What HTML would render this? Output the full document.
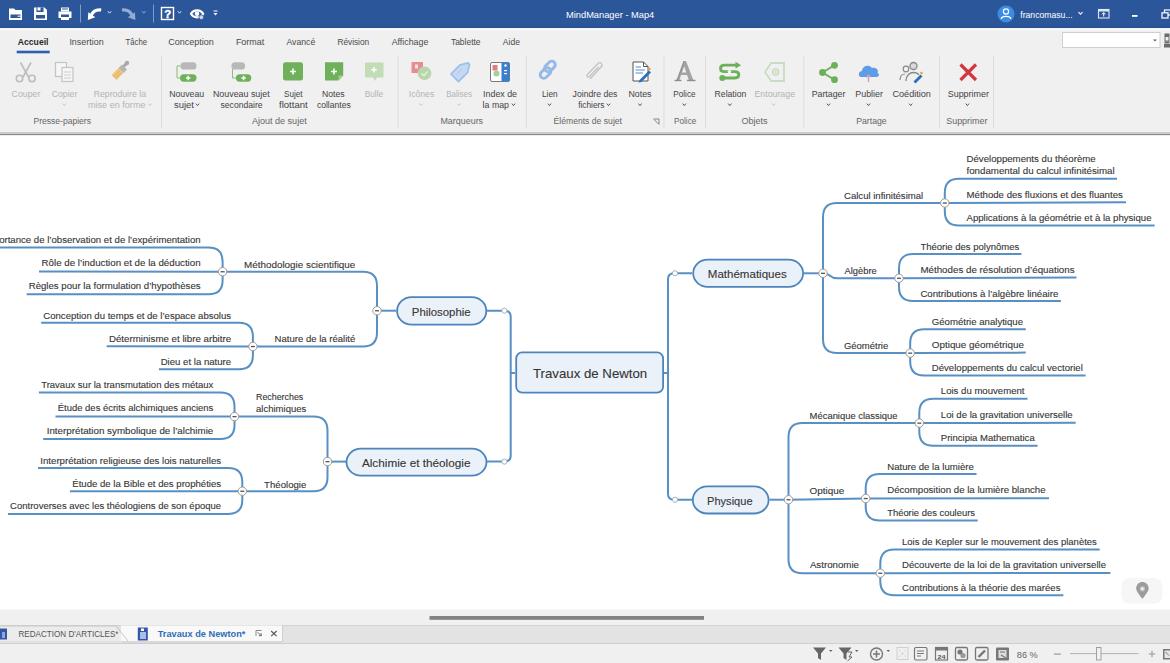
<!DOCTYPE html>
<html><head><meta charset="utf-8"><style>
html,body{margin:0;padding:0;background:#fff;overflow:hidden;}
svg{display:block;font-family:"Liberation Sans",sans-serif;}
.m text{stroke:#444;stroke-width:0.12px;}
</style></head><body>
<svg width="1170" height="663" viewBox="0 0 1170 663">
<rect x="0" y="0" width="1170" height="663" fill="#ffffff"/>
<rect x="0" y="0" width="1170" height="28" fill="#2b579a"/>
<rect x="0" y="28" width="1170" height="107" fill="#f0f0f0"/>
<rect x="0" y="28" width="1170" height="3" fill="#f4f5f4"/>
<rect x="0" y="131" width="1170" height="1" fill="#f3f3f3"/>
<rect x="0" y="132" width="1170" height="1" fill="#c6c6c6"/>
<rect x="0" y="133" width="1170" height="1" fill="#cfcfcf"/>
<rect x="0" y="134" width="1170" height="1" fill="#888888"/>
<rect x="0" y="135" width="1170" height="1" fill="#ededed"/>
<rect x="0" y="609" width="1170" height="1" fill="#f7f7f7"/>
<rect x="0" y="610" width="1170" height="15" fill="#f0f0f0"/>
<rect x="0" y="625" width="1170" height="1" fill="#d2d2d2"/>
<rect x="0" y="626" width="1170" height="17" fill="#e3e3e3"/>
<rect x="0" y="643" width="1170" height="1" fill="#cfcfcf"/>
<rect x="0" y="644" width="1170" height="19" fill="#f0f0f0"/>
<g class="m">
<path d="M515,373 L510.7,373" stroke="#5890c4" stroke-width="2.0" fill="none"/>
<path d="M510.7,373 L510.7,316.7 Q510.7,310.7 504.7,310.7 L487,310.7" stroke="#5890c4" stroke-width="2.0" fill="none"/>
<path d="M510.7,373 L510.7,455.6 Q510.7,461.6 504.7,461.6 L487,461.6" stroke="#5890c4" stroke-width="2.0" fill="none"/>
<path d="M664,373 L668,373" stroke="#5890c4" stroke-width="2.0" fill="none"/>
<path d="M668,373 L668,279.3 Q668,273.3 674,273.3 L692,273.3" stroke="#5890c4" stroke-width="2.0" fill="none"/>
<path d="M668,373 L668,493.7 Q668,499.7 674,499.7 L692,499.7" stroke="#5890c4" stroke-width="2.0" fill="none"/>
<path d="M804,273.3 L823,273.3" stroke="#5890c4" stroke-width="2.0" fill="none"/>
<path d="M769.6,499.7 L788.5,499.7" stroke="#5890c4" stroke-width="2.0" fill="none"/>
<path d="M396,310.7 L377,310.7" stroke="#5890c4" stroke-width="2.0" fill="none"/>
<path d="M346,461.6 L327.5,461.6" stroke="#5890c4" stroke-width="2.0" fill="none"/>
<path d="M823,273.3 L823,217.0 Q823,203.0 837,203.0 L944.8,203.0" stroke="#5890c4" stroke-width="2.0" fill="none" stroke-linecap="butt"/>
<text x="844.0" y="198.7" font-size="9.6" fill="#333" textLength="79.2" lengthAdjust="spacingAndGlyphs">Calcul infinitésimal</text>
<path d="M944.8,203.0 L944.8,192.8 Q944.8,178.8 958.8,178.8 L1117,178.8" stroke="#5890c4" stroke-width="2.0" fill="none" stroke-linecap="butt"/>
<text x="966.5" y="162.1" font-size="9.6" fill="#333" textLength="129.2" lengthAdjust="spacingAndGlyphs">Développements du théorème</text>
<text x="966.5" y="174.4" font-size="9.6" fill="#333" textLength="148.1" lengthAdjust="spacingAndGlyphs">fondamental du calcul infinitésimal</text>
<path d="M944.8,203.0 L1126,202.2" stroke="#5890c4" stroke-width="2.0" fill="none" stroke-linecap="butt"/>
<text x="966.5" y="198.0" font-size="9.6" fill="#333" textLength="156.3" lengthAdjust="spacingAndGlyphs">Méthode des fluxions et des fluantes</text>
<path d="M944.8,203.0 L944.8,211.4 Q944.8,225.4 958.8,225.4 L1154.6,225.4" stroke="#5890c4" stroke-width="2.0" fill="none" stroke-linecap="butt"/>
<text x="966.5" y="221.2" font-size="9.6" fill="#333" textLength="185.0" lengthAdjust="spacingAndGlyphs">Applications à la géométrie et à la physique</text>
<path d="M823,273.3 C831.4,273.3 828.6,278.2 837,278.2 L899,278.2" stroke="#5890c4" stroke-width="2.0" fill="none" stroke-linecap="butt"/>
<text x="844.5" y="273.7" font-size="9.6" fill="#333" textLength="32.3" lengthAdjust="spacingAndGlyphs">Algèbre</text>
<path d="M899,278.2 L899,268.1 Q899,254.1 913,254.1 L1021.4,254.1" stroke="#5890c4" stroke-width="2.0" fill="none" stroke-linecap="butt"/>
<text x="920.4" y="250.1" font-size="9.6" fill="#333" textLength="98.8" lengthAdjust="spacingAndGlyphs">Théorie des polynômes</text>
<path d="M899,278.2 L1076.5,277.6" stroke="#5890c4" stroke-width="2.0" fill="none" stroke-linecap="butt"/>
<text x="920.4" y="273.0" font-size="9.6" fill="#333" textLength="154.2" lengthAdjust="spacingAndGlyphs">Méthodes de résolution d’équations</text>
<path d="M899,278.2 L899,286.9 Q899,300.9 913,300.9 L1060.9,300.9" stroke="#5890c4" stroke-width="2.0" fill="none" stroke-linecap="butt"/>
<text x="920.4" y="296.5" font-size="9.6" fill="#333" textLength="137.9" lengthAdjust="spacingAndGlyphs">Contributions à l’algèbre linéaire</text>
<path d="M823,273.3 L823,339.1 Q823,353.1 837,353.1 L910.2,353.1" stroke="#5890c4" stroke-width="2.0" fill="none" stroke-linecap="butt"/>
<text x="843.9" y="348.6" font-size="9.6" fill="#333" textLength="44.3" lengthAdjust="spacingAndGlyphs">Géométrie</text>
<path d="M910.2,353.1 L910.2,343.2 Q910.2,329.2 924.2,329.2 L1025.8,329.2" stroke="#5890c4" stroke-width="2.0" fill="none" stroke-linecap="butt"/>
<text x="931.8" y="325.1" font-size="9.6" fill="#333" textLength="91.2" lengthAdjust="spacingAndGlyphs">Géométrie analytique</text>
<path d="M910.2,353.1 L1025.8,352.6" stroke="#5890c4" stroke-width="2.0" fill="none" stroke-linecap="butt"/>
<text x="931.8" y="348.1" font-size="9.6" fill="#333" textLength="92.1" lengthAdjust="spacingAndGlyphs">Optique géométrique</text>
<path d="M910.2,353.1 L910.2,361.4 Q910.2,375.4 924.2,375.4 L1085.6,375.4" stroke="#5890c4" stroke-width="2.0" fill="none" stroke-linecap="butt"/>
<text x="931.8" y="371.3" font-size="9.6" fill="#333" textLength="151.0" lengthAdjust="spacingAndGlyphs">Développements du calcul vectoriel</text>
<path d="M788.5,499.7 L788.5,437.1 Q788.5,423.1 802.5,423.1 L919.3,423.1" stroke="#5890c4" stroke-width="2.0" fill="none" stroke-linecap="butt"/>
<text x="809.6" y="419.0" font-size="9.6" fill="#333" textLength="88.0" lengthAdjust="spacingAndGlyphs">Mécanique classique</text>
<path d="M919.3,423.1 L919.3,412.8 Q919.3,398.8 933.3,398.8 L1027.5,398.8" stroke="#5890c4" stroke-width="2.0" fill="none" stroke-linecap="butt"/>
<text x="940.8" y="394.3" font-size="9.6" fill="#333" textLength="83.7" lengthAdjust="spacingAndGlyphs">Lois du mouvement</text>
<path d="M919.3,423.1 L1075.7,422.8" stroke="#5890c4" stroke-width="2.0" fill="none" stroke-linecap="butt"/>
<text x="940.8" y="418.0" font-size="9.6" fill="#333" textLength="131.9" lengthAdjust="spacingAndGlyphs">Loi de la gravitation universelle</text>
<path d="M919.3,423.1 L919.3,431.8 Q919.3,445.8 933.3,445.8 L1037.6,445.8" stroke="#5890c4" stroke-width="2.0" fill="none" stroke-linecap="butt"/>
<text x="940.8" y="441.3" font-size="9.6" fill="#333" textLength="93.9" lengthAdjust="spacingAndGlyphs">Principia Mathematica</text>
<path d="M788.5,499.7 L865.7,498.5" stroke="#5890c4" stroke-width="2.0" fill="none" stroke-linecap="butt"/>
<text x="809.6" y="494.4" font-size="9.6" fill="#333" textLength="34.7" lengthAdjust="spacingAndGlyphs">Optique</text>
<path d="M865.7,498.5 L865.7,488.1 Q865.7,474.1 879.7,474.1 L976.5,474.1" stroke="#5890c4" stroke-width="2.0" fill="none" stroke-linecap="butt"/>
<text x="887.2" y="469.6" font-size="9.6" fill="#333" textLength="86.6" lengthAdjust="spacingAndGlyphs">Nature de la lumière</text>
<path d="M865.7,498.5 L1049,498.2" stroke="#5890c4" stroke-width="2.0" fill="none" stroke-linecap="butt"/>
<text x="887.2" y="492.9" font-size="9.6" fill="#333" textLength="158.4" lengthAdjust="spacingAndGlyphs">Décomposition de la lumière blanche</text>
<path d="M865.7,498.5 L865.7,506.5 Q865.7,520.5 879.7,520.5 L977.7,520.5" stroke="#5890c4" stroke-width="2.0" fill="none" stroke-linecap="butt"/>
<text x="887.2" y="516.0" font-size="9.6" fill="#333" textLength="87.8" lengthAdjust="spacingAndGlyphs">Théorie des couleurs</text>
<path d="M788.5,499.7 L788.5,559.2 Q788.5,573.2 802.5,573.2 L880.3,573.2" stroke="#5890c4" stroke-width="2.0" fill="none" stroke-linecap="butt"/>
<text x="809.9" y="568.4" font-size="9.6" fill="#333" textLength="49.1" lengthAdjust="spacingAndGlyphs">Astronomie</text>
<path d="M880.3,573.2 L880.3,563.4 Q880.3,549.4 894.3,549.4 L1099.7,549.4" stroke="#5890c4" stroke-width="2.0" fill="none" stroke-linecap="butt"/>
<text x="902.0" y="544.9" font-size="9.6" fill="#333" textLength="194.8" lengthAdjust="spacingAndGlyphs">Lois de Kepler sur le mouvement des planètes</text>
<path d="M880.3,573.2 L1110.4,572.9" stroke="#5890c4" stroke-width="2.0" fill="none" stroke-linecap="butt"/>
<text x="902.0" y="568.1" font-size="9.6" fill="#333" textLength="204.0" lengthAdjust="spacingAndGlyphs">Découverte de la loi de la gravitation universelle</text>
<path d="M880.3,573.2 L880.3,581.3 Q880.3,595.3 894.3,595.3 L1063.4,595.3" stroke="#5890c4" stroke-width="2.0" fill="none" stroke-linecap="butt"/>
<text x="902.0" y="590.8" font-size="9.6" fill="#333" textLength="158.4" lengthAdjust="spacingAndGlyphs">Contributions à la théorie des marées</text>
<path d="M377,310.7 L377,285.7 Q377,271.7 363,271.7 L222.6,271.7" stroke="#5890c4" stroke-width="2.0" fill="none" stroke-linecap="butt"/>
<text x="244.0" y="267.5" font-size="9.6" fill="#333" textLength="111.3" lengthAdjust="spacingAndGlyphs">Méthodologie scientifique</text>
<path d="M222.6,271.7 L222.6,261.6 Q222.6,247.6 208.6,247.6 L-20,247.6" stroke="#5890c4" stroke-width="2.0" fill="none" stroke-linecap="butt"/>
<text x="-16.9" y="243.1" font-size="9.6" fill="#333" textLength="217.5" lengthAdjust="spacingAndGlyphs">Importance de l’observation et de l’expérimentation</text>
<path d="M222.6,271.7 L39,271.4" stroke="#5890c4" stroke-width="2.0" fill="none" stroke-linecap="butt"/>
<text x="41.6" y="266.3" font-size="9.6" fill="#333" textLength="159.0" lengthAdjust="spacingAndGlyphs">Rôle de l’induction et de la déduction</text>
<path d="M222.6,271.7 L222.6,280.3 Q222.6,294.3 208.6,294.3 L26.7,294.3" stroke="#5890c4" stroke-width="2.0" fill="none" stroke-linecap="butt"/>
<text x="28.7" y="289.3" font-size="9.6" fill="#333" textLength="171.9" lengthAdjust="spacingAndGlyphs">Règles pour la formulation d’hypothèses</text>
<path d="M377,310.7 L377,332.5 Q377,346.5 363,346.5 L252.9,346.5" stroke="#5890c4" stroke-width="2.0" fill="none" stroke-linecap="butt"/>
<text x="274.6" y="342.4" font-size="9.6" fill="#333" textLength="80.7" lengthAdjust="spacingAndGlyphs">Nature de la réalité</text>
<path d="M252.9,346.5 L252.9,336.7 Q252.9,322.7 238.9,322.7 L41.1,322.7" stroke="#5890c4" stroke-width="2.0" fill="none" stroke-linecap="butt"/>
<text x="43.3" y="318.5" font-size="9.6" fill="#333" textLength="187.8" lengthAdjust="spacingAndGlyphs">Conception du temps et de l’espace absolus</text>
<path d="M252.9,346.5 L106.7,346.3" stroke="#5890c4" stroke-width="2.0" fill="none" stroke-linecap="butt"/>
<text x="108.9" y="341.8" font-size="9.6" fill="#333" textLength="122.2" lengthAdjust="spacingAndGlyphs">Déterminisme et libre arbitre</text>
<path d="M252.9,346.5 L252.9,355.3 Q252.9,369.3 238.9,369.3 L158.9,369.3" stroke="#5890c4" stroke-width="2.0" fill="none" stroke-linecap="butt"/>
<text x="160.7" y="364.7" font-size="9.6" fill="#333" textLength="70.4" lengthAdjust="spacingAndGlyphs">Dieu et la nature</text>
<path d="M327.5,461.6 L327.5,430.6 Q327.5,416.6 313.5,416.6 L234.5,416.6" stroke="#5890c4" stroke-width="2.0" fill="none" stroke-linecap="butt"/>
<text x="256.0" y="399.5" font-size="9.6" fill="#333" textLength="47.3" lengthAdjust="spacingAndGlyphs">Recherches</text>
<text x="256.0" y="412.0" font-size="9.6" fill="#333" textLength="50.3" lengthAdjust="spacingAndGlyphs">alchimiques</text>
<path d="M234.5,416.6 L234.5,406.4 Q234.5,392.4 220.5,392.4 L38.9,392.4" stroke="#5890c4" stroke-width="2.0" fill="none" stroke-linecap="butt"/>
<text x="41.2" y="387.9" font-size="9.6" fill="#333" textLength="172.1" lengthAdjust="spacingAndGlyphs">Travaux sur la transmutation des métaux</text>
<path d="M234.5,416.6 L55.5,416.4" stroke="#5890c4" stroke-width="2.0" fill="none" stroke-linecap="butt"/>
<text x="57.8" y="411.2" font-size="9.6" fill="#333" textLength="155.5" lengthAdjust="spacingAndGlyphs">Étude des écrits alchimiques anciens</text>
<path d="M234.5,416.6 L234.5,424.9 Q234.5,438.9 220.5,438.9 L43.2,438.9" stroke="#5890c4" stroke-width="2.0" fill="none" stroke-linecap="butt"/>
<text x="46.7" y="433.8" font-size="9.6" fill="#333" textLength="166.6" lengthAdjust="spacingAndGlyphs">Interprétation symbolique de l’alchimie</text>
<path d="M327.5,461.6 L327.5,477.2 Q327.5,491.2 313.5,491.2 L242.3,491.2" stroke="#5890c4" stroke-width="2.0" fill="none" stroke-linecap="butt"/>
<text x="264.1" y="487.6" font-size="9.6" fill="#333" textLength="42.2" lengthAdjust="spacingAndGlyphs">Théologie</text>
<path d="M242.3,491.2 L242.3,482.0 Q242.3,468.0 228.3,468.0 L38,468.0" stroke="#5890c4" stroke-width="2.0" fill="none" stroke-linecap="butt"/>
<text x="40.3" y="463.5" font-size="9.6" fill="#333" textLength="180.8" lengthAdjust="spacingAndGlyphs">Interprétation religieuse des lois naturelles</text>
<path d="M242.3,491.2 L70,491.2" stroke="#5890c4" stroke-width="2.0" fill="none" stroke-linecap="butt"/>
<text x="72.3" y="486.7" font-size="9.6" fill="#333" textLength="148.8" lengthAdjust="spacingAndGlyphs">Étude de la Bible et des prophéties</text>
<path d="M242.3,491.2 L242.3,499.9 Q242.3,513.9 228.3,513.9 L8,513.9" stroke="#5890c4" stroke-width="2.0" fill="none" stroke-linecap="butt"/>
<text x="10.1" y="509.4" font-size="9.6" fill="#333" textLength="211.0" lengthAdjust="spacingAndGlyphs">Controverses avec les théologiens de son époque</text>
<rect x="516.2" y="352.4" width="146.89999999999998" height="40.30000000000001" rx="6" fill="#ebf1f9" stroke="#4c84bd" stroke-width="1.8"/>
<text x="533.0" y="378.3" font-size="13.2" fill="#333" textLength="114.2" lengthAdjust="spacingAndGlyphs">Travaux de Newton</text>
<rect x="693.2" y="259.7" width="109.89999999999998" height="27.100000000000023" rx="14.5" fill="#ebf1f9" stroke="#4c84bd" stroke-width="1.8"/>
<text x="707.8" y="278.3" font-size="11" fill="#333" textLength="78.9" lengthAdjust="spacingAndGlyphs">Mathématiques</text>
<rect x="692.8" y="486.3" width="75.80000000000007" height="27.19999999999999" rx="14.5" fill="#ebf1f9" stroke="#4c84bd" stroke-width="1.8"/>
<text x="707.0" y="504.7" font-size="11" fill="#333" textLength="45.6" lengthAdjust="spacingAndGlyphs">Physique</text>
<rect x="397.1" y="297.1" width="89.19999999999999" height="27.599999999999966" rx="14.5" fill="#ebf1f9" stroke="#4c84bd" stroke-width="1.8"/>
<text x="411.8" y="316.1" font-size="11" fill="#333" textLength="58.8" lengthAdjust="spacingAndGlyphs">Philosophie</text>
<rect x="346.5" y="448.6" width="140.0" height="27.0" rx="14.5" fill="#ebf1f9" stroke="#4c84bd" stroke-width="1.8"/>
<text x="361.9" y="467.1" font-size="11" fill="#333" textLength="108.6" lengthAdjust="spacingAndGlyphs">Alchimie et théologie</text>
<circle cx="944.8" cy="203.0" r="4.2" fill="#fff" stroke="#9a9a9a" stroke-width="1"/>
<rect x="942.8" y="202.4" width="4" height="1.3" fill="#555"/>
<circle cx="899" cy="278.2" r="4.2" fill="#fff" stroke="#9a9a9a" stroke-width="1"/>
<rect x="897" y="277.59999999999997" width="4" height="1.3" fill="#555"/>
<circle cx="910.2" cy="353.1" r="4.2" fill="#fff" stroke="#9a9a9a" stroke-width="1"/>
<rect x="908.2" y="352.5" width="4" height="1.3" fill="#555"/>
<circle cx="823" cy="273.3" r="4.2" fill="#fff" stroke="#9a9a9a" stroke-width="1"/>
<rect x="821" y="272.7" width="4" height="1.3" fill="#555"/>
<circle cx="919.3" cy="423.1" r="4.2" fill="#fff" stroke="#9a9a9a" stroke-width="1"/>
<rect x="917.3" y="422.5" width="4" height="1.3" fill="#555"/>
<circle cx="865.7" cy="498.5" r="4.2" fill="#fff" stroke="#9a9a9a" stroke-width="1"/>
<rect x="863.7" y="497.9" width="4" height="1.3" fill="#555"/>
<circle cx="880.3" cy="573.2" r="4.2" fill="#fff" stroke="#9a9a9a" stroke-width="1"/>
<rect x="878.3" y="572.6" width="4" height="1.3" fill="#555"/>
<circle cx="788.5" cy="499.7" r="4.2" fill="#fff" stroke="#9a9a9a" stroke-width="1"/>
<rect x="786.5" y="499.09999999999997" width="4" height="1.3" fill="#555"/>
<circle cx="222.6" cy="271.7" r="4.2" fill="#fff" stroke="#9a9a9a" stroke-width="1"/>
<rect x="220.6" y="271.09999999999997" width="4" height="1.3" fill="#555"/>
<circle cx="252.9" cy="346.5" r="4.2" fill="#fff" stroke="#9a9a9a" stroke-width="1"/>
<rect x="250.9" y="345.9" width="4" height="1.3" fill="#555"/>
<circle cx="377" cy="310.7" r="4.2" fill="#fff" stroke="#9a9a9a" stroke-width="1"/>
<rect x="375" y="310.09999999999997" width="4" height="1.3" fill="#555"/>
<circle cx="234.5" cy="416.6" r="4.2" fill="#fff" stroke="#9a9a9a" stroke-width="1"/>
<rect x="232.5" y="416.0" width="4" height="1.3" fill="#555"/>
<circle cx="242.3" cy="491.2" r="4.2" fill="#fff" stroke="#9a9a9a" stroke-width="1"/>
<rect x="240.3" y="490.59999999999997" width="4" height="1.3" fill="#555"/>
<circle cx="327.5" cy="461.6" r="4.2" fill="#fff" stroke="#9a9a9a" stroke-width="1"/>
<rect x="325.5" y="461.0" width="4" height="1.3" fill="#555"/>
<circle cx="504.4" cy="310.7" r="2.6" fill="#fff" stroke="#9ab" stroke-width="0.9"/>
<circle cx="504.4" cy="461.6" r="2.6" fill="#fff" stroke="#9ab" stroke-width="0.9"/>
<circle cx="675" cy="273.3" r="2.6" fill="#fff" stroke="#9ab" stroke-width="0.9"/>
<circle cx="675" cy="499.7" r="2.6" fill="#fff" stroke="#9ab" stroke-width="0.9"/>
</g>
<rect x="0" y="26.6" width="1170" height="1.2" fill="#264f8f"/>
<text x="566.0" y="17.6" font-size="9.8" fill="#ffffff" textLength="88.3" lengthAdjust="spacingAndGlyphs">MindManager - Map4</text>
<path d="M9,8.5 L14,8.5 L15.5,10 L22,10 L22,20 L9,20 Z" stroke="#fff" stroke-width="0" fill="#fff"/>
<rect x="10.5" y="14.5" width="10" height="3.5" fill="#2c589e"/>
<path d="M17.5,16.2 L21,16.2" stroke="#fff" stroke-width="1" fill="none"/>
<path d="M34,7.5 L44.5,7.5 L47,10 L47,20 L34,20 Z" stroke="#fff" stroke-width="0" fill="#fff"/>
<rect x="36.5" y="7.5" width="7" height="4.5" fill="#2c589e"/>
<rect x="37.5" y="7.5" width="3" height="3" fill="#fff"/>
<rect x="36" y="15" width="9" height="3.5" fill="#2c589e"/>
<rect x="61" y="7.5" width="8" height="4" fill="#fff"/>
<rect x="58.5" y="11.5" width="13" height="6.5" fill="#fff"/>
<rect x="61" y="14.5" width="8" height="2.5" fill="#2c589e"/>
<rect x="61" y="17" width="8" height="3" fill="#fff"/>
<rect x="62" y="8.5" width="6" height="1" fill="#2c589e"/>
<rect x="80" y="4.5" width="1" height="18" fill="#7d9ccc"/>
<path d="M101.2,10 C96.5,9.3 93,11.5 91.2,15.2" stroke="#fff" stroke-width="3.2" fill="none"/>
<path d="M87.8,20 L88.3,12.2 L95.3,17.2 Z" stroke="#fff" stroke-width="0" fill="#fff"/>
<path d="M107.8,11.2 L109.5,13.2 L111.2,11.2" stroke="#dde6f3" stroke-width="1.0" fill="none"/>
<path d="M122,10 C126.7,9.3 130.2,11.5 132,15.2" stroke="#94abd3" stroke-width="3.2" fill="none"/>
<path d="M135.4,20 L134.9,12.2 L127.9,17.2 Z" stroke="#94abd3" stroke-width="0" fill="#94abd3"/>
<path d="M142.10000000000002,11.2 L143.8,13.2 L145.5,11.2" stroke="#94abd3" stroke-width="1.0" fill="none"/>
<rect x="153" y="4.5" width="1" height="18" fill="#7d9ccc"/>
<rect x="161.5" y="7.5" width="12" height="12" fill="none" stroke="#fff" stroke-width="1.4"/>
<text x="164.3" y="17.6" font-size="11.5" fill="#fff" font-weight="bold" stroke="#fff" stroke-width="0.4">?</text>
<path d="M177.8,11.2 L179.5,13.2 L181.2,11.2" stroke="#dde6f3" stroke-width="1.0" fill="none"/>
<path d="M191,13.8 C193.5,9.3 200.5,9 203.2,13.8 C200.5,18.6 193.5,18.4 191,13.8 Z" stroke="#fff" stroke-width="2.2" fill="none"/>
<circle cx="197" cy="13.8" r="2.3" fill="#fff" stroke="none" stroke-width="1"/>
<circle cx="201.3" cy="17.3" r="2.4" fill="#c9d4e8" stroke="#2b579a" stroke-width="0.8"/>
<rect x="213.5" y="10.5" width="4" height="1" fill="#fff"/>
<path d="M213.5,13 L217.5,13 L215.5,15.5 Z" stroke="#fff" stroke-width="0" fill="#fff"/>
<circle cx="1006" cy="14" r="8.5" fill="#3c8ce6" stroke="none" stroke-width="1"/>
<circle cx="1006" cy="11.5" r="2.6" fill="none" stroke="#fff" stroke-width="1.2"/>
<path d="M1001.2,19 C1001.5,15.5 1010.5,15.5 1010.8,19" stroke="#fff" stroke-width="1.2" fill="none"/>
<text x="1020.3" y="17.6" font-size="9.8" fill="#fff" textLength="52.3" lengthAdjust="spacingAndGlyphs">francomasu...</text>
<path d="M1078.5,12.1 L1080.5,14.299999999999999 L1082.5,12.1" stroke="#fff" stroke-width="1.1" fill="none"/>
<rect x="1098.5" y="9.5" width="10.5" height="8.5" fill="none" stroke="#dfe7f4" stroke-width="1.1"/>
<rect x="1098.5" y="9.5" width="10.5" height="2" fill="#dfe7f4"/>
<path d="M1103.7,16.5 L1103.7,12.8 M1102,14.3 L1103.7,12.6 L1105.4,14.3" stroke="#fff" stroke-width="1" fill="none"/>
<rect x="1132" y="15" width="5.5" height="1.8" fill="#fff"/>
<rect x="1164.5" y="10" width="6" height="5" fill="none" stroke="#fff" stroke-width="1.2"/>
<rect x="1162" y="12.8" width="6" height="5.2" fill="#2b579a" stroke="#fff" stroke-width="1.2"/>
<text x="17.8" y="44.8" font-size="9.8" fill="#2b2b2b" font-weight="bold" textLength="30.7" lengthAdjust="spacingAndGlyphs">Accueil</text>
<text x="69.4" y="44.8" font-size="9.8" fill="#4a4a4a" textLength="34.2" lengthAdjust="spacingAndGlyphs">Insertion</text>
<text x="125.5" y="44.8" font-size="9.8" fill="#4a4a4a" textLength="21.5" lengthAdjust="spacingAndGlyphs">Tâche</text>
<text x="168.2" y="44.8" font-size="9.8" fill="#4a4a4a" textLength="45.5" lengthAdjust="spacingAndGlyphs">Conception</text>
<text x="235.9" y="44.8" font-size="9.8" fill="#4a4a4a" textLength="28.4" lengthAdjust="spacingAndGlyphs">Format</text>
<text x="286.5" y="44.8" font-size="9.8" fill="#4a4a4a" textLength="28.7" lengthAdjust="spacingAndGlyphs">Avancé</text>
<text x="337.4" y="44.8" font-size="9.8" fill="#4a4a4a" textLength="31.8" lengthAdjust="spacingAndGlyphs">Révision</text>
<text x="391.7" y="44.8" font-size="9.8" fill="#4a4a4a" textLength="36.6" lengthAdjust="spacingAndGlyphs">Affichage</text>
<text x="450.9" y="44.8" font-size="9.8" fill="#4a4a4a" textLength="29.7" lengthAdjust="spacingAndGlyphs">Tablette</text>
<text x="502.8" y="44.8" font-size="9.8" fill="#4a4a4a" textLength="17.1" lengthAdjust="spacingAndGlyphs">Aide</text>
<rect x="16.7" y="50.7" width="33" height="2.6" fill="#2b5fb4"/>
<rect x="1062.5" y="32.5" width="97.5" height="15" fill="#fff" stroke="#d0d0d0" stroke-width="1"/>
<path d="M1153,39.5 L1157,39.5 L1155,41.5 Z" stroke="#666" stroke-width="0" fill="#666"/>
<rect x="1164.5" y="33.5" width="5" height="2.5" fill="#6a6a6a"/>
<rect x="1165" y="36.5" width="4" height="4.5" fill="none" stroke="#6a6a6a" stroke-width="1"/>
<rect x="1164.5" y="41.5" width="5" height="2" fill="#6a6a6a"/>
<rect x="1164" y="44" width="6" height="3.5" fill="#6a6a6a"/>
<rect x="161" y="56" width="1" height="72" fill="#dcdcdc"/>
<rect x="397.5" y="56" width="1" height="72" fill="#dcdcdc"/>
<rect x="525.8" y="56" width="1" height="72" fill="#dcdcdc"/>
<rect x="663.5" y="56" width="1" height="72" fill="#dcdcdc"/>
<rect x="705" y="56" width="1" height="72" fill="#dcdcdc"/>
<rect x="803.3" y="56" width="1" height="72" fill="#dcdcdc"/>
<rect x="939" y="56" width="1" height="72" fill="#dcdcdc"/>
<rect x="993" y="56" width="1" height="72" fill="#dcdcdc"/>
<text x="11.6" y="96.8" font-size="9.6" fill="#b4b4b4" textLength="28.7" lengthAdjust="spacingAndGlyphs">Couper</text>
<text x="51.7" y="96.8" font-size="9.6" fill="#b4b4b4" textLength="25.6" lengthAdjust="spacingAndGlyphs">Copier</text>
<path d="M62.9,103.6 L64.5,105.6 L66.1,103.6" stroke="#c8c8c8" stroke-width="1.0" fill="none"/>
<text x="93.7" y="96.8" font-size="9.6" fill="#b4b4b4" textLength="52.3" lengthAdjust="spacingAndGlyphs">Reproduire la</text>
<text x="88.0" y="107.6" font-size="9.6" fill="#b4b4b4" textLength="57.5" lengthAdjust="spacingAndGlyphs">mise en forme</text>
<path d="M148.4,103.6 L150,105.6 L151.6,103.6" stroke="#c8c8c8" stroke-width="1.0" fill="none"/>
<text x="33.5" y="124.3" font-size="9.6" fill="#666" textLength="57.5" lengthAdjust="spacingAndGlyphs">Presse-papiers</text>
<text x="169.2" y="96.8" font-size="9.6" fill="#444" textLength="34.9" lengthAdjust="spacingAndGlyphs">Nouveau</text>
<text x="174.0" y="107.6" font-size="9.6" fill="#444" textLength="20.0" lengthAdjust="spacingAndGlyphs">sujet</text>
<path d="M195.9,103.6 L197.5,105.6 L199.1,103.6" stroke="#555" stroke-width="1.0" fill="none"/>
<text x="212.9" y="96.8" font-size="9.6" fill="#444" textLength="56.8" lengthAdjust="spacingAndGlyphs">Nouveau sujet</text>
<text x="220.5" y="107.6" font-size="9.6" fill="#444" textLength="42.1" lengthAdjust="spacingAndGlyphs">secondaire</text>
<text x="284.1" y="96.8" font-size="9.6" fill="#444" textLength="18.5" lengthAdjust="spacingAndGlyphs">Sujet</text>
<text x="279.0" y="107.6" font-size="9.6" fill="#444" textLength="28.7" lengthAdjust="spacingAndGlyphs">flottant</text>
<text x="322.0" y="96.8" font-size="9.6" fill="#444" textLength="22.6" lengthAdjust="spacingAndGlyphs">Notes</text>
<text x="316.9" y="107.6" font-size="9.6" fill="#444" textLength="33.9" lengthAdjust="spacingAndGlyphs">collantes</text>
<text x="364.7" y="96.8" font-size="9.6" fill="#b4b4b4" textLength="18.5" lengthAdjust="spacingAndGlyphs">Bulle</text>
<text x="251.9" y="124.3" font-size="9.6" fill="#666" textLength="54.8" lengthAdjust="spacingAndGlyphs">Ajout de sujet</text>
<text x="408.8" y="96.8" font-size="9.6" fill="#b4b4b4" textLength="25.4" lengthAdjust="spacingAndGlyphs">Icônes</text>
<path d="M419.4,103.6 L421,105.6 L422.6,103.6" stroke="#c8c8c8" stroke-width="1.0" fill="none"/>
<text x="446.2" y="96.8" font-size="9.6" fill="#b4b4b4" textLength="25.8" lengthAdjust="spacingAndGlyphs">Balises</text>
<path d="M457.4,103.6 L459,105.6 L460.6,103.6" stroke="#c8c8c8" stroke-width="1.0" fill="none"/>
<text x="483.1" y="96.8" font-size="9.6" fill="#444" textLength="33.9" lengthAdjust="spacingAndGlyphs">Index de</text>
<text x="482.6" y="107.6" font-size="9.6" fill="#444" textLength="26.4" lengthAdjust="spacingAndGlyphs">la map</text>
<path d="M511.9,103.6 L513.5,105.6 L515.1,103.6" stroke="#555" stroke-width="1.0" fill="none"/>
<text x="440.4" y="124.3" font-size="9.6" fill="#666" textLength="42.7" lengthAdjust="spacingAndGlyphs">Marqueurs</text>
<text x="542.0" y="96.8" font-size="9.6" fill="#444" textLength="15.6" lengthAdjust="spacingAndGlyphs">Lien</text>
<path d="M547.9,103.6 L549.5,105.6 L551.1,103.6" stroke="#555" stroke-width="1.0" fill="none"/>
<text x="572.6" y="96.8" font-size="9.6" fill="#444" textLength="44.8" lengthAdjust="spacingAndGlyphs">Joindre des</text>
<text x="578.2" y="107.6" font-size="9.6" fill="#444" textLength="26.3" lengthAdjust="spacingAndGlyphs">fichiers</text>
<path d="M606.9,103.6 L608.5,105.6 L610.1,103.6" stroke="#555" stroke-width="1.0" fill="none"/>
<text x="628.5" y="96.8" font-size="9.6" fill="#444" textLength="23.0" lengthAdjust="spacingAndGlyphs">Notes</text>
<path d="M638.4,103.6 L640,105.6 L641.6,103.6" stroke="#555" stroke-width="1.0" fill="none"/>
<text x="553.5" y="124.3" font-size="9.6" fill="#666" textLength="68.5" lengthAdjust="spacingAndGlyphs">Éléments de sujet</text>
<path d="M653.5,119 L659,119 L659,124.5 M654,119.5 L658.5,124" stroke="#777" stroke-width="0.9" fill="none"/>
<text x="673.3" y="96.8" font-size="9.6" fill="#444" textLength="22.2" lengthAdjust="spacingAndGlyphs">Police</text>
<path d="M682.6999999999999,103.6 L684.3,105.6 L685.9,103.6" stroke="#555" stroke-width="1.0" fill="none"/>
<text x="674.0" y="124.3" font-size="9.6" fill="#666" textLength="22.3" lengthAdjust="spacingAndGlyphs">Police</text>
<text x="714.6" y="96.8" font-size="9.6" fill="#444" textLength="31.7" lengthAdjust="spacingAndGlyphs">Relation</text>
<path d="M728.1999999999999,103.6 L729.8,105.6 L731.4,103.6" stroke="#555" stroke-width="1.0" fill="none"/>
<text x="754.4" y="96.8" font-size="9.6" fill="#b4b4b4" textLength="40.7" lengthAdjust="spacingAndGlyphs">Entourage</text>
<path d="M772.0,103.6 L773.6,105.6 L775.2,103.6" stroke="#c8c8c8" stroke-width="1.0" fill="none"/>
<text x="741.4" y="124.3" font-size="9.6" fill="#666" textLength="26.1" lengthAdjust="spacingAndGlyphs">Objets</text>
<text x="811.7" y="96.8" font-size="9.6" fill="#444" textLength="33.7" lengthAdjust="spacingAndGlyphs">Partager</text>
<path d="M826.9,103.6 L828.5,105.6 L830.1,103.6" stroke="#555" stroke-width="1.0" fill="none"/>
<text x="855.3" y="96.8" font-size="9.6" fill="#444" textLength="27.6" lengthAdjust="spacingAndGlyphs">Publier</text>
<path d="M866.9,103.6 L868.5,105.6 L870.1,103.6" stroke="#555" stroke-width="1.0" fill="none"/>
<text x="892.5" y="96.8" font-size="9.6" fill="#444" textLength="38.4" lengthAdjust="spacingAndGlyphs">Coédition</text>
<path d="M909.1,103.6 L910.7,105.6 L912.3000000000001,103.6" stroke="#555" stroke-width="1.0" fill="none"/>
<text x="856.2" y="124.3" font-size="9.6" fill="#666" textLength="30.5" lengthAdjust="spacingAndGlyphs">Partage</text>
<text x="947.7" y="96.8" font-size="9.6" fill="#444" textLength="41.3" lengthAdjust="spacingAndGlyphs">Supprimer</text>
<path d="M965.8,103.6 L967.4,105.6 L969.0,103.6" stroke="#555" stroke-width="1.0" fill="none"/>
<text x="946.2" y="124.3" font-size="9.6" fill="#666" textLength="41.3" lengthAdjust="spacingAndGlyphs">Supprimer</text>
<path d="M20.5,62.5 L28.5,77 M31,62.5 L23,77" stroke="#bdbdbd" stroke-width="1.6" fill="none"/>
<circle cx="19.5" cy="78.5" r="3.2" fill="none" stroke="#bdbdbd" stroke-width="1.6"/>
<circle cx="32" cy="78.5" r="3.2" fill="none" stroke="#bdbdbd" stroke-width="1.6"/>
<rect x="55.5" y="62.5" width="11" height="14" fill="#f6f6f6" stroke="#c4c4c4" stroke-width="1.2"/>
<rect x="62" y="67.5" width="11" height="14" fill="#f6f6f6" stroke="#c4c4c4" stroke-width="1.2"/>
<path d="M64,72 L71,72 M64,75 L71,75 M64,78 L71,78" stroke="#cfcfcf" stroke-width="1" fill="none"/>
<path d="M111.5,75 L118.5,68 L123.5,73 L116.5,80 Z" stroke="#f0c57c" stroke-width="0" fill="#f0c57c"/>
<path d="M113.5,77 L119.5,71 M115.5,78.5 L121,73" stroke="#dba658" stroke-width="0.8" fill="none"/>
<path d="M118.5,68 L122,64.5 L127,69.5 L123.5,73 Z" stroke="#b4b4b4" stroke-width="0" fill="#b4b4b4"/>
<path d="M123.5,66.5 L127,63" stroke="#a8a8a8" stroke-width="3" fill="none"/>
<circle cx="127" cy="63" r="2.2" fill="#a8a8a8" stroke="none" stroke-width="1"/>
<rect x="180.5" y="62.3" width="16" height="7.2" fill="#b8b8b8" rx="3.6"/>
<rect x="180" y="74.3" width="16.5" height="7.5" fill="#6fb05a" rx="3.7"/>
<path d="M180.5,66 L177,66 L177,78 L180,78" stroke="#8dbb7a" stroke-width="1" fill="none"/>
<path d="M188.2,75.8 L188.2,80.2 M186,78 L190.4,78" stroke="#fff" stroke-width="1.4" fill="none"/>
<rect x="231.4" y="62.3" width="13.7" height="7.2" fill="#b8b8b8" rx="3.6"/>
<rect x="235.9" y="74.3" width="15.4" height="7.5" fill="#6fb05a" rx="3.7"/>
<path d="M232.5,69 L232.5,78 L236,78" stroke="#8dbb7a" stroke-width="1" fill="none"/>
<path d="M243.6,75.8 L243.6,80.2 M241.4,78 L245.8,78" stroke="#fff" stroke-width="1.4" fill="none"/>
<rect x="283" y="62.3" width="20" height="18.2" fill="#6fb05a" rx="2.5"/>
<path d="M293,68.5 L293,74.5 M290,71.5 L296,71.5" stroke="#fff" stroke-width="1.6" fill="none"/>
<path d="M325,62.3 L343.2,62.3 L343.2,75.5 L338.5,80.5 L325,80.5 Z" stroke="#6fb05a" stroke-width="0" fill="#6fb05a"/>
<path d="M343.2,75.5 L338.5,75.5 L338.5,80.5 Z" stroke="#9fd08a" stroke-width="0" fill="#9fd08a"/>
<path d="M334,68.5 L334,74.5 M331,71.5 L337,71.5" stroke="#fff" stroke-width="1.6" fill="none"/>
<path d="M365,62.5 L383.5,62.5 L383.5,77.5 L377,77.5 L375,81 L373,77.5 L365,77.5 Z" stroke="#c3dcb8" stroke-width="0" fill="#c3dcb8"/>
<path d="M374,67 L374,72.5 M371.3,69.8 L376.7,69.8" stroke="#fff" stroke-width="1.4" fill="none"/>
<rect x="411.5" y="62" width="11.5" height="11" fill="#e58d92" rx="0.5"/>
<rect x="415" y="64.5" width="3" height="4" fill="#fff" opacity="0.7"/>
<circle cx="424.5" cy="73.2" r="6.8" fill="#b9d6aa" stroke="none" stroke-width="1"/>
<path d="M421.5,73.5 L423.8,75.8 L427.5,71.5" stroke="#e8f2e2" stroke-width="1.3" fill="none"/>
<path d="M451,74 L460,65 L468,63 L469.5,64.5 L467.5,72.5 L458.5,81.5 Z" stroke="#c4daf4" stroke-width="1.6" fill="#c4daf4"/>
<path d="M451,74 L460,65 L468,63 L469.5,64.5 L467.5,72.5 L458.5,81.5 Z" stroke="#9cc0ea" stroke-width="1.6" fill="none"/>
<path d="M456.5,74.5 L462,69" stroke="#e0b0b0" stroke-width="0.9" fill="none"/>
<rect x="490.5" y="62.5" width="19" height="19" fill="#fff" stroke="#7a7a7a" stroke-width="1" rx="1.5"/>
<rect x="501.5" y="62.5" width="8" height="19" fill="#3a7fd0" rx="1"/>
<rect x="492.5" y="65" width="5" height="5.5" fill="#e07b80"/>
<circle cx="496.5" cy="73.5" r="3" fill="#a9cf98" stroke="none" stroke-width="1"/>
<circle cx="505.5" cy="65.5" r="1.2" fill="#fff" stroke="none" stroke-width="1"/>
<rect x="504" y="70" width="3" height="1.2" fill="#fff"/>
<rect x="504" y="73" width="3" height="1.2" fill="#fff"/>
<path d="M543,78 L556,66" stroke="#96b9e6" stroke-width="0" fill="none"/>
<rect x="539.5" y="69.5" width="12" height="7" fill="none" rx="3.5" transform="rotate(-45 545.5 73)" stroke="#96b9e6" stroke-width="3"/>
<rect x="547.5" y="61.5" width="12" height="7" fill="none" rx="3.5" transform="rotate(-45 553.5 70)" stroke="#96b9e6" stroke-width="3"/>
<path d="M590,79 L601,67 C603.5,64.5 600.5,61 598,63.5 L587.5,74.5 C586,76 588,78 589.5,76.5 L598.5,67" stroke="#c4c4c4" stroke-width="1.4" fill="none"/>
<path d="M633,62 L643.5,62 L648,66.5 L648,81 L633,81 Z" stroke="#555" stroke-width="1" fill="#fff"/>
<path d="M643.5,62 L643.5,66.5 L648,66.5" stroke="#555" stroke-width="1" fill="none"/>
<path d="M635.5,67 L641,67 M635.5,70 L645,70 M635.5,73 L643,73" stroke="#4f8fd8" stroke-width="1" fill="none"/>
<path d="M639.5,80 L649,70.5 L651,72.5 L641.5,82 L638.5,82.5 Z" stroke="#2e6fbd" stroke-width="0" fill="#2e6fbd"/>
<circle cx="649.5" cy="69" r="1.2" fill="#f0a030" stroke="none" stroke-width="1"/>
<path d="M676.5,80.5 L684,61 L686,61 L693.5,80.5 L689,80.5 L687,75 L681,75 L679.5,80.5 Z" stroke="#9a9a9a" stroke-width="0" fill="#a4a4a4"/>
<path d="M682,72.5 L686.2,72.5 L684.2,66.5 Z" stroke="#f3f3f3" stroke-width="0" fill="#f3f3f3"/>
<rect x="674.5" y="79.8" width="7" height="1.4" fill="#8e8e8e"/>
<rect x="687" y="79.8" width="8.5" height="1.4" fill="#8e8e8e"/>
<path d="M684,61 L677,80.5" stroke="#8a8a8a" stroke-width="1" fill="none"/>
<path d="M738.5,65.2 L724.5,65.2 C719.2,65.2 719.2,71.7 724.5,71.7 L734.8,71.7 C740.2,71.7 740.2,78 734.8,78 L722.5,78" stroke="#6cb05a" stroke-width="2.8" fill="none"/>
<path d="M735.5,61.8 L741.2,65.2 L735.5,68.6 Z" stroke="#6cb05a" stroke-width="0" fill="#6cb05a"/>
<circle cx="722.3" cy="78" r="3" fill="#6cb05a" stroke="none" stroke-width="1"/>
<path d="M729.4,69.6 L731.5,71.7 L729.4,73.8 L727.3,71.7 Z" stroke="#fff" stroke-width="0" fill="#fff"/>
<path d="M765,72 L771.2,63 L784,63 L784,81 L771.2,81 Z" stroke="#c8dcc0" stroke-width="1.8" fill="none"/>
<circle cx="775.5" cy="72" r="3" fill="none" stroke="#c8dcc0" stroke-width="1.5"/>
<path d="M775.5,70.3 L775.5,73.7 M773.8,72 L777.2,72" stroke="#c8dcc0" stroke-width="1" fill="none"/>
<path d="M822.5,72.5 L834,65.5 M822.5,72.5 L834,79.5" stroke="#6cb05a" stroke-width="2" fill="none"/>
<circle cx="822.5" cy="72.5" r="3.4" fill="#6cb05a" stroke="none" stroke-width="1"/>
<circle cx="834.5" cy="65.3" r="3.4" fill="#6cb05a" stroke="none" stroke-width="1"/>
<circle cx="834.5" cy="79.7" r="3.4" fill="#6cb05a" stroke="none" stroke-width="1"/>
<path d="M861,77 C858,77 858,71 862,71 C862,66 869,63.5 872,68 C876,67 879,70 877.5,73 C880,74 879,77 876.5,77 Z" stroke="#5d9ce6" stroke-width="0" fill="#5d9ce6"/>
<path d="M868.5,75 L868.5,82 M866.3,77.2 L868.5,75 L870.7,77.2" stroke="#c8a0b8" stroke-width="1.4" fill="none"/>
<circle cx="913.5" cy="66" r="3.5" fill="#d8d8d8" stroke="#888" stroke-width="1.3"/>
<circle cx="906" cy="69" r="2.8" fill="none" stroke="#888" stroke-width="1.2"/>
<path d="M906,81 C906,75 910,72.5 913.5,72.5 C916,72.5 918,73.5 919,75" stroke="#888" stroke-width="1.3" fill="none"/>
<path d="M900,80 C900,76 902.5,74 905,74" stroke="#888" stroke-width="1.2" fill="none"/>
<path d="M913.5,81.5 L920.5,74.5 L922.5,76.5 L915.5,83.5 Z" stroke="#2e6fbd" stroke-width="0" fill="#2e6fbd"/>
<circle cx="921.5" cy="73" r="1.3" fill="#f0a030" stroke="none" stroke-width="1"/>
<path d="M960.5,64.5 L976,80 M976,64.5 L960.5,80" stroke="#d0393d" stroke-width="3.2" fill="none"/>
<rect x="1121.5" y="578" width="41" height="25.5" fill="#f6f6f6" rx="8"/>
<path d="M1142.4,598.8 C1138.5,594 1136.2,591 1136.2,588.2 C1136.2,584.6 1139,582 1142.4,582 C1145.8,582 1148.6,584.6 1148.6,588.2 C1148.6,591 1146.3,594 1142.4,598.8 Z" stroke="#9c9c9c" stroke-width="0" fill="#9c9c9c"/>
<circle cx="1142.4" cy="588.8" r="2.6" fill="#c4c4c4" stroke="none" stroke-width="1"/>
<circle cx="1142.4" cy="588.8" r="1.3" fill="#fafafa" stroke="none" stroke-width="1"/>
<rect x="429.5" y="616" width="274.5" height="3.8" fill="#828282"/>
<path d="M-2,626 L116,626 L128,641 L-2,641 Z" stroke="#e9e9e9" stroke-width="0" fill="#ececec"/>
<path d="M-2,626 L116,626 L128,641" stroke="#c8c8c8" stroke-width="1" fill="none"/>
<rect x="0" y="628.5" width="7" height="11" fill="#3557a8"/>
<rect x="2" y="632" width="3" height="6" fill="#8fa6d8"/>
<text x="18.5" y="637.2" font-size="9.6" fill="#555" textLength="100.0" lengthAdjust="spacingAndGlyphs">REDACTION D&#x27;ARTICLES*</text>
<rect x="121" y="625.5" width="161" height="15.5" fill="#f9f9f9"/>
<rect x="121" y="641" width="161" height="2" fill="#d9d9d9"/>
<path d="M116,626 L128,641" stroke="#c8c8c8" stroke-width="1" fill="none"/>
<rect x="282" y="626" width="1" height="16" fill="#cfcfcf"/>
<rect x="137.8" y="627.5" width="10" height="13" fill="#3557a8"/>
<rect x="140" y="632" width="6" height="7" fill="#a9bde6"/>
<rect x="141" y="628.5" width="3" height="2.5" fill="#fff"/>
<text x="157.7" y="637.2" font-size="9.6" fill="#2f6db5" font-weight="bold" textLength="87.7" lengthAdjust="spacingAndGlyphs">Travaux de Newton*</text>
<path d="M256,636 L256,630.5 L261.5,630.5" stroke="#888" stroke-width="1" fill="none"/>
<path d="M257.8,632.3 L261.2,635.7 M258.8,635.7 L261.2,635.7 L261.2,633.3" stroke="#666" stroke-width="1" fill="none"/>
<path d="M271.2,631 L276.6,636.2 M276.6,631 L271.2,636.2" stroke="#555" stroke-width="1.1" fill="none"/>
<path d="M813,647.5 L826,647.5 L821,653.5 L821,660 L818,658 L818,653.5 Z" stroke="#666" stroke-width="0" fill="#666"/>
<path d="M829,650 L832.5,650 L830.75,652 Z" stroke="#666" stroke-width="0" fill="#666"/>
<path d="M838.5,647.5 L851.5,647.5 L846.5,653.5 L846.5,660 L843.5,658 L843.5,653.5 Z" stroke="#666" stroke-width="0" fill="#666"/>
<path d="M848,652 L852,652 L849,657 L852,657 L847.5,661" stroke="#666" stroke-width="1" fill="none"/>
<path d="M855,650 L858.5,650 L856.75,652 Z" stroke="#666" stroke-width="0" fill="#666"/>
<circle cx="876.5" cy="654" r="6" fill="none" stroke="#777" stroke-width="1.4"/>
<path d="M876.5,650.5 L876.5,657.5 M873,654 L880,654" stroke="#777" stroke-width="1.6" fill="none"/>
<path d="M886.5,650 L890,650 L888.25,652 Z" stroke="#666" stroke-width="0" fill="#666"/>
<rect x="897" y="647.5" width="11" height="12" fill="none" stroke="#d0d0d0" stroke-width="1"/>
<circle cx="902.5" cy="653.5" r="1" fill="#c8c8c8" stroke="none" stroke-width="1"/>
<path d="M899,650 L900.5,651.5 M906,650 L904.5,651.5 M899,657 L900.5,655.5 M906,657 L904.5,655.5" stroke="#c8c8c8" stroke-width="0.9" fill="none"/>
<rect x="914.5" y="647.5" width="12.5" height="12.5" fill="none" stroke="#777" stroke-width="1.2" rx="1.5"/>
<path d="M917,651 L924,651 M917,653.5 L924,653.5 M917,656 L921,656" stroke="#777" stroke-width="1" fill="none"/>
<rect x="935.5" y="647.5" width="12" height="12.5" fill="none" stroke="#777" stroke-width="1.2"/>
<rect x="935.5" y="647.5" width="12" height="3" fill="#777"/>
<text x="937.5" y="658.5" font-size="6" fill="#555" font-weight="bold" textLength="8.0" lengthAdjust="spacingAndGlyphs">24</text>
<rect x="955.5" y="647.5" width="12" height="12.5" fill="none" stroke="#777" stroke-width="1.3" rx="1.5"/>
<circle cx="960" cy="652" r="2.6" fill="#777" stroke="none" stroke-width="1"/>
<circle cx="963" cy="655.5" r="2.6" fill="#999" stroke="none" stroke-width="1"/>
<rect x="975.5" y="647.5" width="12.5" height="12.5" fill="none" stroke="#777" stroke-width="1.3" rx="1.5"/>
<path d="M978.5,657 L985,650.5" stroke="#777" stroke-width="2.4" fill="none"/>
<rect x="996" y="647.5" width="13" height="13" fill="#777" rx="1"/>
<rect x="998.5" y="650" width="8" height="8" fill="#ddd"/>
<path d="M1000,652 L1005,652 M1001,655 L1006,658" stroke="#777" stroke-width="1.2" fill="none"/>
<text x="1016.8" y="658.3" font-size="9.6" fill="#666" textLength="20.9" lengthAdjust="spacingAndGlyphs">86 %</text>
<rect x="1054" y="653.5" width="7" height="1.2" fill="#999"/>
<rect x="1070" y="653.2" width="68.5" height="0.9" fill="#ababab"/>
<rect x="1096.5" y="647.5" width="4.5" height="12.5" fill="#f0f0f0" stroke="#999" stroke-width="0.9"/>
<path d="M1148.8,654 L1155.2,654 M1152,650.8 L1152,657.2" stroke="#999" stroke-width="1.1" fill="none"/>
<rect x="1163" y="649" width="9" height="10.5" fill="#777"/>
<rect x="1164.5" y="650.5" width="7" height="7.5" fill="#e6e6e6"/>
<path d="M1165.5,652 L1169,655.5" stroke="#777" stroke-width="1" fill="none"/>
</svg>
</body></html>
